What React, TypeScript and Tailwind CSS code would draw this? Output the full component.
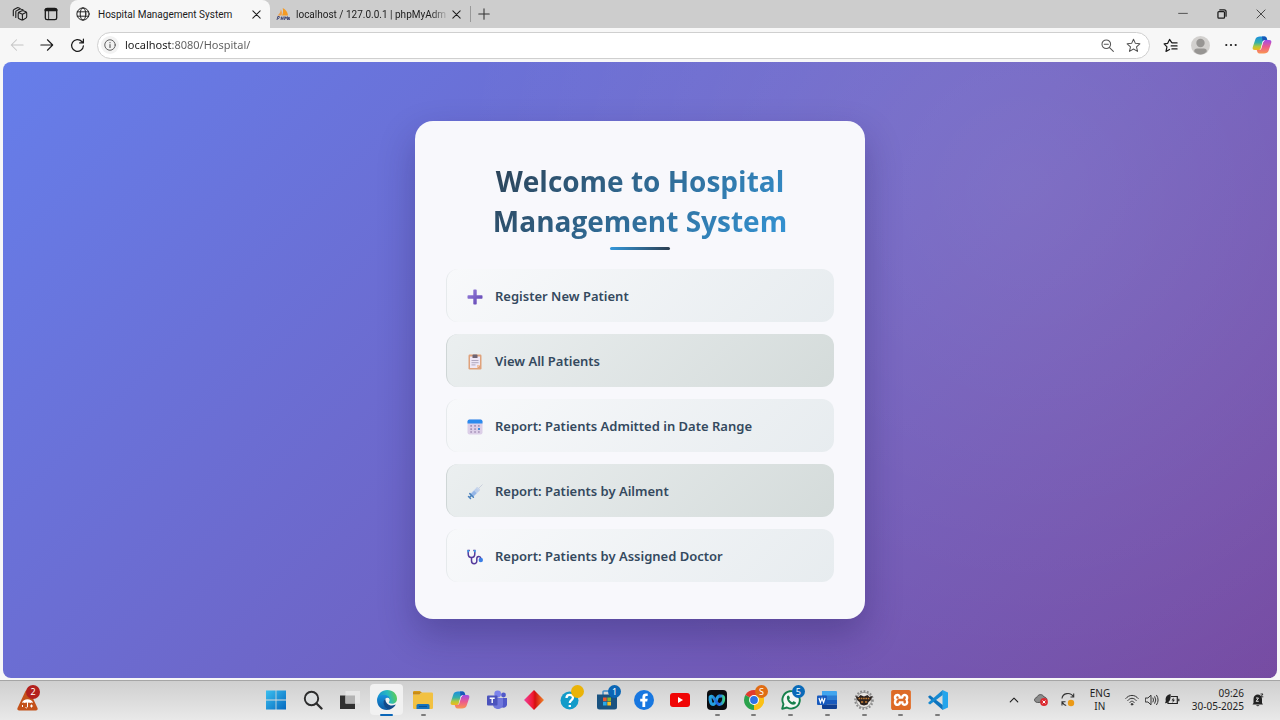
import type { ReactNode } from "react";
import { SiXampp } from "react-icons/si";

/* ---------- Browser icons ---------- */

function Stroke({ size = 16, width = 1.2, className = "", children }: { size?: number; width?: number; className?: string; children: ReactNode }) {
  return (
    <svg width={size} height={size} viewBox="0 0 16 16" fill="none" stroke="currentColor" strokeWidth={width} strokeLinecap="round" strokeLinejoin="round" className={className} aria-hidden="true">
      {children}
    </svg>
  );
}

const WorkspacesIcon = () => (
  <Stroke size={16} width={1.1}>
    <path d="M6.200 7.500q0-1 .9-1.400l3-1.300q.6-.2 1.200 0l2.600 1q.8.300.8 1.200v3.800q0 .8-.8 1.300l-2.700 1.700q-.7.400-1.400.1l-2.700-1.200q-.9-.4-.9-1.300zM6.600 6.600l3.800 1.600v5.600M10.400 8.200l4-1.900" />
    <path d="M3.800 11.500V5.800q0-.8.700-1.100l3.400-1.600q.6-.3 1.200 0l2 .8" />
    <path d="M1.300 9.800V4.500q0-.8.700-1.100l3.300-1.600q.6-.3 1.200 0l1.500.6" />
  </Stroke>
);

const TabActionsIcon = () => (
  <Stroke size={14} width={1.500}>
    <rect x="1.500" y="1.500" width="13" height="13" rx="2" />
    <path d="M2 3.400h12" strokeWidth="3" />
    <path d="M5.300 5v9" strokeWidth="1" />
  </Stroke>
);

const GlobeIcon = () => (
  <Stroke size={14} width={1.100} className="shrink-0">
    <circle cx="8" cy="8" r="7" />
    <ellipse cx="8" cy="8" rx="3.200" ry="7" />
    <path d="M1.500 5.500h13M1.500 10.500h13" />
  </Stroke>
);

const CloseIcon = ({ size = 9, width = 1.800 }: { size?: number; width?: number }) => (
  <Stroke size={size} width={width}>
    <path d="m1.500 1.500 13 13M14.500 1.500l-13 13" />
  </Stroke>
);

const PhpMyAdminIcon = () => (
  <svg className="shrink-0" width="14" height="14" viewBox="0 0 14 14" aria-hidden="true">
    <path d="M1.500 8.500C3.400 7 4.600 5 4.800 2.200 6 4 6.200 6.500 5.600 8.600z" fill="#f0a04a" />
    <path d="M6 8.600C7.200 6 7.300 3.500 6.700 1c3 1.500 5 4.200 5.300 7.400z" fill="#f59a23" />
    <path d="M1 13l.8-3.500h1.500q1 .9-.3 1.800H1.700M5 13l.6-3.400M7.300 9.600 6.800 13M5.300 11.300h1.800M8.500 13l.5-3.400 1 2 1.300-2 .2 3.400M12 13l1-3 .5 3" fill="none" stroke="#39406f" strokeWidth=".9" />
  </svg>
);

const BackIcon = () => (
  <Stroke size={14} width={1.200}>
    <path d="M15 8H1.500M7.500 2l-6 6 6 6" />
  </Stroke>
);

const ForwardIcon = () => (
  <Stroke size={14} width={1.300}>
    <path d="M1 8h13.500M8.500 2l6 6-6 6" />
  </Stroke>
);

const ReloadIcon = () => (
  <Stroke size={15} width={1.300}>
    <path d="M14.300 8.300A6.300 6.300 0 1 1 12.600 3.700L14.200 5.200M14.300 1.300v4h-4" />
  </Stroke>
);

const InfoIcon = () => (
  <Stroke size={12} width={1.200}>
    <circle cx="8" cy="8" r="7" />
    <path d="M8 7.300v4M8 4.800v.2" strokeWidth="1.500" />
  </Stroke>
);

const ZoomOutIcon = () => (
  <Stroke size={13} width={1.300}>
    <circle cx="6.500" cy="6.500" r="5.300" />
    <path d="M4 6.500h5M10.500 10.500l4.700 4.700" />
  </Stroke>
);

const StarIcon = () => (
  <Stroke size={15} width={1.100}>
    <path d="m8 1.300 2 4.400 4.800.5-3.600 3.200 1.100 4.900L8 11.800l-4.300 2.500 1.100-4.900L1.200 6.200 6 5.700z" />
  </Stroke>
);

const FavoritesIcon = () => (
  <Stroke size={15} width={1.300}>
    <path d="M9.300 5 7 1.500 5 5.700 1.200 6.200l3 3.200-1 4.900L7 12.200M10 5.200h5M8.700 8.400H15M9.500 11.600H15" />
  </Stroke>
);

const ProfileIcon = () => (
  <svg width="19" height="19" viewBox="0 0 19 19" aria-hidden="true">
    <circle cx="9.500" cy="9.500" r="9.500" fill="#d2d0ce" />
    <circle cx="9.500" cy="7" r="4.200" fill="#979593" />
    <path d="M3.200 15.500c0-2 1-2.900 3-2.900h6.600c2 0 3 .9 3 2.900-3.400 4-9.200 4-12.600 0z" fill="#979593" />
  </svg>
);

function CopilotIcon({ id }: { id: string }) {
  return (
    <svg width="20" height="20" viewBox="0 0 20 20" aria-hidden="true">
      <defs>
        <linearGradient id={`${id}-a`} x1="0" y1="0" x2="0" y2="1">
          <stop offset="0" stopColor="#1b8ee0" />
          <stop offset=".45" stopColor="#36b1a8" />
          <stop offset=".75" stopColor="#b4c93a" />
          <stop offset="1" stopColor="#f4b61c" />
        </linearGradient>
        <linearGradient id={`${id}-b`} x1="0" y1="0" x2="0" y2="1">
          <stop offset="0" stopColor="#a04de8" />
          <stop offset=".5" stopColor="#ec5a8c" />
          <stop offset="1" stopColor="#fa9650" />
        </linearGradient>
      </defs>
      <path d="M8 1.500h4.600c1.300 0 1.800.7 2.200 2L15.300 5h-2.400c-1.500 0-2.100.8-2.500 2.200L8.800 13c-.4 1.400-1 2-2.300 2H2.800C.8 15 .3 13.700.8 12L3.400 4.200C4 2.300 5.600 1.500 8 1.500z" fill={`url(#${id}-a)`} />
      <path d="M12 18.500H7.400c-1.300 0-1.800-.7-2.200-2L4.700 15h2.400c1.500 0 2.100-.8 2.500-2.200L11.200 7c.4-1.400 1-2 2.300-2h3.700c2 0 2.500 1.300 2 3l-2.600 7.800c-.6 1.900-2.200 2.700-4.600 2.700z" fill={`url(#${id}-b)`} />
      <path d="M9.300 12 10.600 7.200C11 5.800 11.500 5 12.900 5L10.800 7.800 9.200 13z" fill="#fff" />
      <path d="M10 1.500h2.600c1.300 0 1.800.7 2.200 2L15.300 5h-2.400c-1.200 0-1.900.6-2.300 1.600z" fill="#1858b8" />
    </svg>
  );
}

/* ---------- Menu icons ---------- */

const PlusIcon = () => (
  <svg width="16" height="16" viewBox="0 0 16 16" aria-hidden="true">
    <defs>
      <linearGradient id="plus" x1="0" y1="0" x2="1" y2="1">
        <stop offset="0" stopColor="#9a83dc" />
        <stop offset="1" stopColor="#5b3fb0" />
      </linearGradient>
    </defs>
    <path d="M6.300 1.200q0-.7.700-.7h2q.7 0 .7.700v5.100h5.100q.7 0 .7.700v2q0 .7-.7.700H9.700v5.100q0 .7-.7.700H7q-.7 0-.7-.7V9.700H1.200q-.7 0-.7-.7V7q0-.7.700-.7h5.100z" fill="url(#plus)" />
  </svg>
);

const ClipboardIcon = () => (
  <svg width="16" height="16" viewBox="0 0 16 16" aria-hidden="true">
    <rect x="1.500" y=".5" width="13" height="15" rx="1.200" fill="#dfa27c" />
    <path d="M3 2.500h10V11l-3 3H3z" fill="#eee7f6" />
    <path d="M13 11h-3v3z" fill="#f3c3a2" />
    <path d="M5.500 1.500q0-1 1-1h3q1 0 1 1V4h-5z" fill="#6d6474" />
    <path d="M4.500 6.500h7M4.500 8.700h7M4.500 10.900h4" stroke="#a9a0ba" strokeWidth=".9" />
  </svg>
);

const CalendarIcon = () => (
  <svg width="16" height="16" viewBox="0 0 16 16" aria-hidden="true">
    <rect x=".5" y=".5" width="15" height="15" rx="2" fill="#dccfe8" />
    <path d="M.5 4.500v-2q0-2 2-2h11q2 0 2 2v2z" fill="#2c8bee" />
    <path d="M3.300 6h1.700v1.700H3.300zM7.200 6h1.700v1.700H7.200zM3.300 9.200h1.700v1.700H3.300zM7.200 9.200h1.700v1.700H7.200zM11 6h1.700v1.700H11zM3.300 12.300h1.700v1.500H3.300zM7.200 12.300h1.700v1.500H7.200zM11 12.300h1.700v1.500H11z" fill="#a592b8" />
    <path d="M11 9h2v2h-2z" fill="#3c8de0" />
  </svg>
);

const SyringeIcon = () => (
  <svg width="16" height="16" viewBox="0 0 16 16" aria-hidden="true">
    <path d="m11 5 4.500-4.500" stroke="#c7cdda" strokeWidth=".9" />
    <path d="m3 10 6.500-6.300q1-.8 2 .1l.9.900q.9 1 0 2L6 13z" fill="#bccfec" />
    <path d="m3.500 10.500 3.700-3.700 2.300 2.500L6 12.800z" fill="#93b5e6" />
    <path d="m2.800 9.600 3.600 3.600M1.500 12.500l2 2M2.500 13.500l1.500-1.500" stroke="#4c83bd" strokeWidth="1.500" strokeLinecap="round" />
    <path d="m9.500 3.500 3 3" stroke="#ccd7ea" strokeWidth="1.200" />
  </svg>
);

const StethoscopeIcon = () => (
  <svg width="16" height="16" viewBox="0 0 16 16" fill="none" aria-hidden="true">
    <path d="M2.800 1.500H1.200v3.200C1.200 7.300 2.500 8.500 4.500 8.500S7.800 7.300 7.800 4.700V1.500H6.300" stroke="#553b9c" strokeWidth="1.500" />
    <path d="M4.500 8.500v3.200c0 4 5.300 4 5.300.2V9.800c0-3 3.600-3.200 4.100-.3" stroke="#553b9c" strokeWidth="1.500" />
    <path d="M1.200 1v2.200M7.800 1v2.200" stroke="#33a0ee" strokeWidth="1.500" />
    <circle cx="13.800" cy="11" r="2.200" fill="#3b7fe6" />
  </svg>
);

/* ---------- Taskbar icons ---------- */

const App20 = ({ children }: { children: ReactNode }) => (
  <svg width="20" height="20" viewBox="0 0 20 20" aria-hidden="true">{children}</svg>
);

const WindowsIcon = () => (
  <App20>
    <defs>
      <linearGradient id="win" gradientUnits="userSpaceOnUse" x1="0" y1="0" x2="20" y2="20">
        <stop offset="0" stopColor="#3cc0f0" />
        <stop offset="1" stopColor="#0468bf" />
      </linearGradient>
    </defs>
    <path d="M0 .5h9.600v9.100H0zM10.400.5H20v9.100h-9.600zM0 10.400h9.600v9.100H0zM10.400 10.400H20v9.100h-9.600z" fill="url(#win)" />
  </App20>
);

const SearchIcon = () => (
  <App20>
    <circle cx="8.500" cy="8.500" r="6.700" fill="#dcdedf" stroke="#2c2c2c" strokeWidth="1.900" />
    <path d="m13.500 13.500 5 5" stroke="#2c2c2c" strokeWidth="2.300" strokeLinecap="round" />
  </App20>
);

const TaskViewIcon = () => (
  <App20>
    <path d="M0 5.500h15V19H0z" fill="#303030" />
    <path d="M5.500 1H20v12.500H5.500z" fill="#e6e6e6" />
    <path d="M5.500 5.500H15v8H5.500z" fill="#b3b3b3" />
  </App20>
);

const EdgeIcon = () => (
  <App20>
    <defs>
      <linearGradient id="edge-top" x1="0" y1=".5" x2="1" y2=".3">
        <stop offset="0" stopColor="#168fd1" />
        <stop offset=".55" stopColor="#28b9c0" />
        <stop offset="1" stopColor="#62cf4b" />
      </linearGradient>
      <linearGradient id="edge-left" x1="0" y1="0" x2="0" y2="1">
        <stop offset="0" stopColor="#1893dc" />
        <stop offset="1" stopColor="#0c59a4" />
      </linearGradient>
    </defs>
    <path d="M.2 9.300C.8 3.700 5 0 10.200 0 16 0 20 4 20 8.700c0 3.200-2.200 5.100-4.900 5.100-2.500 0-3.700-.8-3.200-1.700 1.700-2.700.1-5.400-3-5.400C4.700 6.700 1 8.500.2 12z" fill="url(#edge-top)" />
    <path d="M.1 10.500C.3 6.500 3.600 4.800 7 4.900c3.700 0 6 2.100 5.700 4.300-.8-1.300-2-1.700-3.300-1.200-4.300 1.800-2.900 9.800 3 11.600C5.800 21.200 0 16.500.1 10.500z" fill="url(#edge-left)" />
    <path d="M8.300 8.700C5 11 6.200 18 12.200 19.700c2.500-.6 4.700-2 6.300-4.600.3-.4 0-.7-.5-.4-4.200 2-9.500-.1-9.700-6z" fill="#114a8b" />
  </App20>
);

const FolderIcon = () => (
  <App20>
    <path d="M0 2.200Q0 1 1.200 1H7l2 2H0z" fill="#d79b18" />
    <path d="M0 4.500h6.500L9 2.500h9.800q1.200 0 1.200 1.200v14.100q0 1.200-1.200 1.200H1.200Q0 19 0 17.800z" fill="#f2c141" />
    <path d="M0 4.500V2.200h8.600L6.500 4.500z" fill="#c98a12" />
    <path d="M3.500 19v-3.500q0-1.500 1.500-1.500h10q1.500 0 1.500 1.500V19z" fill="#1572bd" />
    <path d="M6 16.500h8" stroke="#0c5391" strokeWidth="1.200" />
  </App20>
);

const TeamsIcon = () => (
  <App20>
    <circle cx="16.500" cy="5" r="2.400" fill="#5059c9" />
    <circle cx="10.700" cy="4" r="3.400" fill="#7b83eb" />
    <path d="M13 8h7v6.500c0 3.500-5 4.300-7 1.500z" fill="#5059c9" />
    <path d="M6 8h10v6.500c0 6-10 6-10 0z" fill="#7078dc" />
    <rect x="0" y="5.500" width="10.500" height="10" rx="1" fill="#4b53bc" />
    <path d="M2.700 8.200h5M5.200 8.200V13" stroke="#fff" strokeWidth="1.400" />
  </App20>
);

const DiamondIcon = () => (
  <App20>
    <defs>
      <linearGradient id="diamond" x1="0" y1="0" x2="1" y2="0">
        <stop offset="0" stopColor="#ee3f9c" />
        <stop offset=".45" stopColor="#f01a30" />
        <stop offset=".55" stopColor="#d40f10" />
        <stop offset="1" stopColor="#f0892b" />
      </linearGradient>
    </defs>
    <path d="m10 0 10 10-10 10L0 10z" fill="url(#diamond)" />
  </App20>
);

const HelpIcon = () => (
  <App20>
    <circle cx="9.500" cy="10.500" r="9" fill="#129bc9" />
    <path d="M6.500 8c0-4 6.500-4 6.500-.4 0 2.700-3.200 2.600-3.200 5.500M9.800 15v2" fill="none" stroke="#fff" strokeWidth="2.300" />
  </App20>
);

const StoreIcon = () => (
  <App20>
    <path d="M6 5V2q0-1 1-1h6q1 0 1 1v3" fill="none" stroke="#3c8bc7" strokeWidth="1.400" />
    <path d="M0 4.500h20V17q0 2.500-2.500 2.500h-15Q0 19.500 0 17z" fill="#195280" />
    <path d="M6 7.500h3.700v3.700H6z" fill="#ec5a2d" />
    <path d="M10.300 7.500H14v3.700h-3.700z" fill="#83b732" />
    <path d="M6 11.800h3.700v3.700H6z" fill="#29a9e6" />
    <path d="M10.300 11.800H14v3.700h-3.700z" fill="#f6bd22" />
  </App20>
);

const FacebookIcon = () => (
  <App20>
    <circle cx="10" cy="10" r="10" fill="#1877e0" />
    <path d="M8.400 17v-5.600H6.200V8.800h2.200V7c0-2.500 1.400-3.600 3.500-3.600l1.800.2v2.300h-1.200c-1 0-1.300.6-1.300 1.300v1.600h2.500l-.5 2.600h-2V17z" fill="#fff" />
  </App20>
);

const YoutubeIcon = () => (
  <App20>
    <rect x="0" y="3" width="20" height="14" rx="3" fill="#f00505" />
    <path d="m8 7 5 3-5 3z" fill="#fff" />
  </App20>
);

const WebexIcon = () => (
  <App20>
    <defs>
      <linearGradient id="webex" x1="0" y1="0" x2="1" y2="0">
        <stop offset="0" stopColor="#2aa9d8" />
        <stop offset=".5" stopColor="#1f5fe0" />
        <stop offset=".8" stopColor="#2a8be0" />
        <stop offset="1" stopColor="#3ccf8c" />
      </linearGradient>
    </defs>
    <rect width="20" height="20" rx="4" fill="#0b0c10" />
    <path d="M3.200 7c-.4 4 .8 7.500 3 7.500 2.900 0 3-8.500 6.300-8.500" fill="none" stroke="#249fe0" strokeWidth="3.200" strokeLinecap="round" />
    <path d="M4 6.300c3-1.500 4.800 8.200 8.500 8.200 3 0 4.300-3.700 4.200-6.500 0-1.800-2-2.500-3.700-1.800" fill="none" stroke="url(#webex)" strokeWidth="3" strokeLinecap="round" />
  </App20>
);

const ChromeIcon = () => (
  <App20>
    <path d="M10 10 1.340 5A10 10 0 0 1 18.660 5z" fill="#e23b2e" />
    <path d="M10 10l8.660-5A10 10 0 0 1 10 20z" fill="#fbc116" />
    <path d="M10 10v10A10 10 0 0 1 1.340 5z" fill="#2ba24c" />
    <path d="M10 5h8.660A10 10 0 0 1 10 20l4.300-7.500z" fill="#fbc116" />
    <circle cx="10" cy="10" r="4.900" fill="#fff" />
    <circle cx="10" cy="10" r="3.900" fill="#2f72e4" />
  </App20>
);

const WhatsappIcon = () => (
  <App20>
    <path d="m1.200 18.800 1.300-4.700a8.700 8.700 0 1 1 3.400 3.400z" fill="#f4f7f4" stroke="#15804b" strokeWidth="1.900" strokeLinejoin="round" />
    <path d="M6 6.500c.5-1.200 1.800-1.300 2.100-.5l.8 1.800c.2.600-.5 1-.8 1.500.7 1.500 1.800 2.400 3.200 3 .5-.3.900-1.200 1.500-1l1.900 1c.7.600-.2 2-1.400 2.300C9.500 15.500 5 10.500 6 6.500z" fill="#15804b" />
  </App20>
);

const WordIcon = () => (
  <App20>
    <path d="M5 1h14q1 0 1 1v4H5z" fill="#41a5ee" />
    <path d="M5 5.500h15V10H5z" fill="#2b7cd3" />
    <path d="M5 10h15v4.500H5z" fill="#185abd" />
    <path d="M5 14.500h15V18q0 1-1 1H6q-1 0-1-1z" fill="#103f91" />
    <rect x="0" y="5.500" width="10" height="9.500" rx="1" fill="#185abd" />
    <path d="m2 8 1.400 4.500L5 8.500l1.600 4L8 8" fill="none" stroke="#fff" strokeWidth="1.200" />
  </App20>
);

const GearBadgeIcon = () => (
  <App20>
    <circle cx="10" cy="10" r="8.800" fill="none" stroke="#8b8b8b" strokeWidth="2" strokeDasharray="1.800 1.600" />
    <circle cx="10" cy="10" r="7.600" fill="#e6e4e1" stroke="#858585" strokeWidth=".8" />
    <path d="M1.500 6 4.500 7l2-2L10 6.500 13.500 5l2 2 3-1-2 4.500-2 1.500-1 2.500-3.500 1-3.500-1-1-2.500-2-1.500z" fill="#2c221e" />
    <path d="M4.500 8.500h11" stroke="#c57f37" strokeWidth="1.600" strokeDasharray="1.600 .7" />
    <path d="M7 12h2.200M11 12h2.200" stroke="#c57f37" strokeWidth="1.300" />
  </App20>
);

const XamppIcon = () => (
  <span className="flex size-5 items-center justify-center rounded-[2px] bg-white">
    <SiXampp size={20} color="#dd6a26" />
  </span>
);

const VsCodeIcon = () => (
  <App20>
    <path d="M14.500 0 20 2.500v15L14.500 20z" fill="#24a5ec" />
    <path d="m0 6.800 2-1.500L14.700 15v5L1.500 8.500z" fill="#0d73bd" />
    <path d="m0 13 2 1.600L14.700 5V0L1.500 11.500z" fill="#1589d1" />
  </App20>
);

type TaskApp = { name: string; icon: ReactNode; running?: boolean; active?: boolean; badge?: string; badgeClass?: string };

const taskApps: TaskApp[] = [
  { name: "Start", icon: <WindowsIcon /> },
  { name: "Search", icon: <SearchIcon /> },
  { name: "Task view", icon: <TaskViewIcon /> },
  { name: "Microsoft Edge", icon: <EdgeIcon />, active: true },
  { name: "File Explorer", icon: <FolderIcon />, running: true },
  { name: "Copilot", icon: <CopilotIcon id="task" /> },
  { name: "Teams", icon: <TeamsIcon /> },
  { name: "Diamond", icon: <DiamondIcon /> },
  { name: "Get Help", icon: <HelpIcon />, badge: "", badgeClass: "bg-[#eab308]" },
  { name: "Microsoft Store", icon: <StoreIcon />, badge: "1", badgeClass: "bg-[#0a66b5]" },
  { name: "Facebook", icon: <FacebookIcon /> },
  { name: "YouTube", icon: <YoutubeIcon /> },
  { name: "Webex", icon: <WebexIcon />, running: true },
  { name: "Chrome", icon: <ChromeIcon />, running: true, badge: "S", badgeClass: "bg-[#e06c14]" },
  { name: "WhatsApp", icon: <WhatsappIcon />, running: true, badge: "5", badgeClass: "bg-[#0a6ab8]" },
  { name: "Word", icon: <WordIcon />, running: true },
  { name: "Gear", icon: <GearBadgeIcon />, running: true },
  { name: "XAMPP", icon: <XamppIcon />, running: true },
  { name: "Visual Studio Code", icon: <VsCodeIcon />, running: true },
];

const menu: { label: string; icon: ReactNode }[] = [
  { label: "Register New Patient", icon: <PlusIcon /> },
  { label: "View All Patients", icon: <ClipboardIcon /> },
  { label: "Report: Patients Admitted in Date Range", icon: <CalendarIcon /> },
  { label: "Report: Patients by Ailment", icon: <SyringeIcon /> },
  { label: "Report: Patients by Assigned Doctor", icon: <StethoscopeIcon /> },
];

/* ---------- Sections ---------- */

function TabStrip() {
  return (
    <header className="flex h-7 items-stretch bg-[#cdcdcd] font-['Roboto','Open_Sans',sans-serif] text-[10px] text-[#1b1b1b]">
      <div className="flex w-[70px] items-center gap-4 pl-3">
        <button aria-label="Workspaces"><WorkspacesIcon /></button>
        <button aria-label="Tab actions"><TabActionsIcon /></button>
      </div>
      <div className="flex w-[200px] items-center rounded-t-lg bg-[#f7f7f7] pr-[9px] pl-[6px]">
        <GlobeIcon />
        <span className="ml-2 flex-1 whitespace-nowrap">Hospital Management System</span>
        <button aria-label="Close tab"><CloseIcon /></button>
      </div>
      <div className="flex w-[200px] items-center pr-[9px] pl-[6px]">
        <PhpMyAdminIcon />
        <span className="ml-[6px] bg-[linear-gradient(90deg,#1b1b1b_90%,#aaaaaa)] bg-clip-text whitespace-nowrap text-transparent">
          localhost / 127.0.0.1 | phpMyAdm
        </span>
        <button aria-label="Close tab" className="ml-auto"><CloseIcon /></button>
      </div>
      <div className="my-[6px] w-px bg-[#999999]" />
      <button aria-label="New tab" className="ml-[7px] text-[#333333]">
        <Stroke size={12} width={1.400}><path d="M8 1v14M1 8h14" /></Stroke>
      </button>
      <div className="ml-auto flex items-center gap-[29px] pr-[14px]">
        <button aria-label="Minimize"><Stroke size={10} width={1.100}><path d="M1 7h14" /></Stroke></button>
        <button aria-label="Restore">
          <Stroke size={10} width={2}>
            <rect x="1.500" y="4" width="10.500" height="10.500" rx="1.500" />
            <path d="M4.500 1.500h7q3 0 3 3v7" />
          </Stroke>
        </button>
        <button aria-label="Close window"><CloseIcon size={10} width={1.200} /></button>
      </div>
    </header>
  );
}

function Toolbar() {
  return (
    <nav className="flex h-[34px] items-center bg-[#f7f7f7] pr-2 pl-[10px] text-[#1b1b1b]">
      <div className="flex items-center gap-4">
        <button aria-label="Back" className="text-[#c4c4c4]"><BackIcon /></button>
        <button aria-label="Forward"><ForwardIcon /></button>
        <button aria-label="Reload"><ReloadIcon /></button>
      </div>
      <div className="ml-3 flex h-[27px] flex-1 items-center rounded-full border border-[#cfcfcf] bg-white pr-2 pl-[3px]">
        <button aria-label="Site information" className="flex size-[18px] items-center justify-center rounded-full bg-[#f2f2f2] text-[#555555]"><InfoIcon /></button>
        <input
          aria-label="Address"
          defaultValue="localhost:8080/Hospital/"
          className="ml-[6px] min-w-0 flex-1 bg-[linear-gradient(90deg,#1b1b1b_47px,#5c5c5c_47px)] bg-clip-text text-[11px] text-transparent outline-none"
        />
        <div className="flex items-center gap-3 text-[#555555]">
          <button aria-label="Zoom out"><ZoomOutIcon /></button>
          <button aria-label="Add to favorites"><StarIcon /></button>
        </div>
      </div>
      <div className="ml-[13px] flex items-center gap-[13px]">
        <button aria-label="Favorites"><FavoritesIcon /></button>
        <button aria-label="Profile"><ProfileIcon /></button>
        <button aria-label="More" className="mx-[2px]">
          <svg width="12" height="4" viewBox="0 0 12 4" fill="#1b1b1b" aria-hidden="true"><circle cx="1.300" cy="2" r="1.100" /><circle cx="6" cy="2" r="1.100" /><circle cx="10.700" cy="2" r="1.100" /></svg>
        </button>
        <button aria-label="Copilot"><CopilotIcon id="bar" /></button>
      </div>
    </nav>
  );
}

function WelcomeCard() {
  return (
    <section className="w-full max-w-[450px] rounded-[18px] bg-[#f8f8fc] px-[31px] pt-10 pb-[37px] shadow-[0_16px_36px_rgba(30,20,80,0.3)]">
      <h1 className="mx-auto w-fit bg-[linear-gradient(135deg,#2c3e50,#3498db)] bg-clip-text px-4 text-center font-['Open_Sans','Noto_Sans',sans-serif] text-[28px] leading-10 font-bold text-transparent">
        Welcome to Hospital
        <br />
        Management System
      </h1>
      <div className="mx-auto mt-[6px] mb-[19px] h-[3px] w-[60px] rounded-full bg-[linear-gradient(90deg,#3498db,#2c3e50)]" />
      <ul className="flex flex-col gap-3">
        {menu.map((item) => (
          <li key={item.label} className="group">
            <a
              href="#"
              className="flex h-[53px] items-center gap-3 rounded-xl border-l border-[#e6eaec] bg-[linear-gradient(135deg,#f8f9fb,#e7ecef)] px-[20px] pt-[2px] text-[13px] font-semibold text-[#34495e] group-even:border-[#cfd6d6] group-even:bg-[linear-gradient(135deg,#ebeff0,#d4dbda)]"
            >
              {item.icon}
              {item.label}
            </a>
          </li>
        ))}
      </ul>
    </section>
  );
}

function Taskbar() {
  return (
    <footer className="flex h-10 items-stretch border-t border-[#a5a5a5] bg-[linear-gradient(180deg,#cfcfcf,#e9e9e9)] pb-[2px] text-[#1f1f1f]">
      <div className="flex flex-[252] items-center pl-[17px]">
        <button aria-label="Weather alerts" className="relative">
          <svg width="21" height="22" viewBox="0 0 21 22" aria-hidden="true">
            <path d="M8.500 2q2-2.500 4 0L20.500 19q.8 2.500-1.500 2.500H2Q-.3 21.500.5 19z" fill="#c4521a" />
            <path d="M5 14c1-5 10-5 11 0q-1.400-1-2.700 0-1.400-1-2.700 0-1.400-1-2.800 0Q6.400 13 5 14z" fill="#fff" />
            <path d="M10.500 13.500V18q-.8 1.500-2 .5M5.500 16v2M14.500 15.500v3M13 17h3" stroke="#fff" fill="none" />
          </svg>
          <span className="absolute -top-1 left-[9px] flex size-[14px] items-center justify-center rounded-full bg-[#b3201d] text-[9px] leading-none text-white">2</span>
        </button>
      </div>
      <div className="grid w-[698px] grid-cols-[repeat(19,minmax(0,1fr))]">
        {taskApps.map((app) => (
          <button key={app.name} aria-label={app.name} className="relative flex items-center justify-center">
            {app.active && <span className="absolute inset-x-[2px] inset-y-[3px] rounded bg-[#f1f1f1]" />}
            <span className="relative">
              {app.icon}
              {app.badge !== undefined && (
                <span className={`absolute -top-[5px] left-[11px] flex size-[13px] items-center justify-center rounded-full text-[9px] leading-none text-white ${app.badgeClass}`}>{app.badge}</span>
              )}
            </span>
            {app.active && <span className="absolute bottom-[2px] h-[2px] w-[13px] rounded-full bg-[#0a66b8]" />}
            {app.running && <span className="absolute bottom-[2px] h-[2px] w-[5px] rounded-full bg-[#7c7c7c]" />}
          </button>
        ))}
      </div>
      <div className="flex flex-[322] items-center justify-end pr-4 text-[10px] leading-[13px]">
        <button aria-label="Hidden icons"><Stroke size={10} width={1.800}><path d="m2 11 6-6 6 6" /></Stroke></button>
        <svg className="ml-[15px]" width="14" height="13" viewBox="0 0 14 13" aria-hidden="true">
          <path d="M3.500 9.500C-.5 9-.2 5 2.800 4.500 3.800 1 8.500.5 10 4c3 .2 3.500 3 2 5z" fill="#8b8b8b" stroke="#555" />
          <circle cx="10" cy="9" r="3.900" fill="#dc2b32" />
          <path d="m8.600 7.600 2.800 2.800M11.400 7.600l-2.800 2.800" stroke="#fff" />
        </svg>
        <svg className="ml-[13px]" width="14" height="15" viewBox="0 0 14 15" fill="none" aria-hidden="true">
          <path d="M1 6.500C1.500 1 9.500-.5 12.500 5M12.700 1.500V5H9.500M1 13.500v-3.700h3.500M1.200 10q1.300 2.800 4 3.500" stroke="#333" strokeWidth="1.100" />
          <circle cx="10" cy="11" r="3.200" fill="#eb9a17" />
        </svg>
        <button className="ml-[15px] w-5 text-center">ENG<br />IN</button>
        <svg className="ml-[15px]" width="14" height="12" viewBox="0 0 14 12" fill="none" stroke="#333" strokeLinecap="round" aria-hidden="true">
          <path d="M.8 4.500C4 .3 10 .3 13.200 4.500M2.800 6.500c2.300-3 6.100-3 8.400 0M4.800 8.500c1.300-1.800 3.100-1.800 4.400 0" />
          <circle cx="7" cy="10.300" r=".8" fill="#333" />
        </svg>
        <svg className="ml-[6px]" width="14" height="12" viewBox="0 0 14 12" fill="none" stroke="#333" strokeLinecap="round" strokeLinejoin="round" aria-hidden="true">
          <path d="M.7 4h2.200L6 1.200v9.600L2.900 8H.7zM8 4q1.200 2 0 4M9.800 2.700q2.200 3.300 0 6.600M11.600 1.300q3.200 4.700 0 9.400" />
        </svg>
        <svg className="ml-[6px]" width="15" height="12" viewBox="0 0 15 12" aria-hidden="true">
          <path d="M6 2.500h6.300v7H3V8M13.800 4.800v2.500" fill="none" stroke="#222" strokeWidth="1.200" />
          <path d="m8.500 3.500-2 3H8l-.7 2.500L10 5.700H8.500z" fill="#222" />
          <path d="M5.500 0C1.500 1 .2 3.500.8 7L0 9.200C4.500 9 6.300 5 5.500 0z" fill="#222" />
        </svg>
        <time className="ml-[12px] text-right whitespace-nowrap">09:26<br />30-05-2025</time>
        <svg className="ml-2" width="12" height="14" viewBox="0 0 12 14" aria-hidden="true">
          <path d="M1.500 10V6C1.500 0 10 0 10 6v4l1 1.500H.5zM4 12.200h3.500q-1.700 2-3.500 0z" fill="#222" />
          <path d="M4 5h2.500L4.200 8.300h2.500" fill="none" stroke="#e5e5e5" />
          <path d="M8.500 1H11L8.800 3.800h2.500" fill="none" stroke="#222" strokeWidth=".9" />
        </svg>
      </div>
    </footer>
  );
}

export default function App() {
  return (
    <div className="flex min-h-screen flex-col bg-[#f7f7f7] font-['Noto_Sans','Open_Sans',sans-serif]">
      <TabStrip />
      <Toolbar />
      <main className="mr-[3px] mb-[2px] ml-[3px] flex flex-1 items-center justify-center rounded-lg bg-[radial-gradient(circle_at_80%_20%,rgba(255,255,255,0.1),transparent_50%),linear-gradient(135deg,#667eea,#764ba2)]">
        <WelcomeCard />
      </main>
      <Taskbar />
    </div>
  );
}
